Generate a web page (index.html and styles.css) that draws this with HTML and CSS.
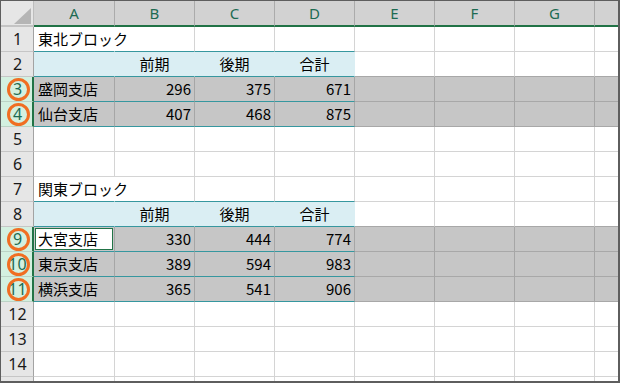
FILE: index.html
```html
<!DOCTYPE html>
<html lang="ja">
<head>
<meta charset="utf-8">
<title>Sheet</title>
<link rel="stylesheet" href="styles.css">
</head>
<body>
<div class="sheet">
  <!-- column headers -->
  <div class="corner"><svg class="tri" width="17" height="16" viewBox="0 0 17 16"><polygon points="17,0 17,16 0,16" fill="#b5b5b5"/></svg></div>
  <div class="ch">A</div><div class="ch">B</div><div class="ch">C</div><div class="ch">D</div><div class="ch">E</div><div class="ch">F</div><div class="ch">G</div><div class="ch last"></div>

  <!-- row 1 -->
  <div class="rh">1</div>
  <div class="c txt over tb">東北ブロック</div><div class="c tb"></div><div class="c tb"></div><div class="c tb"></div><div class="c"></div><div class="c"></div><div class="c"></div><div class="c last"></div>

  <!-- row 2 -->
  <div class="rh">2</div>
  <div class="c th"></div><div class="c th hd">前期</div><div class="c th hd">後期</div><div class="c th hd">合計</div><div class="c sb"></div><div class="c sb"></div><div class="c sb"></div><div class="c sb last"></div>

  <!-- row 3 -->
  <div class="rh sel mark">3</div>
  <div class="c s tb txt">盛岡支店</div><div class="c s tb num">296</div><div class="c s tb num">375</div><div class="c s tb num">671</div><div class="c s"></div><div class="c s"></div><div class="c s"></div><div class="c s last"></div>

  <!-- row 4 -->
  <div class="rh sel mark">4</div>
  <div class="c s tb txt">仙台支店</div><div class="c s tb num">407</div><div class="c s tb num">468</div><div class="c s tb num">875</div><div class="c s"></div><div class="c s"></div><div class="c s"></div><div class="c s last"></div>

  <!-- row 5 -->
  <div class="rh">5</div>
  <div class="c"></div><div class="c"></div><div class="c"></div><div class="c"></div><div class="c"></div><div class="c"></div><div class="c"></div><div class="c last"></div>

  <!-- row 6 -->
  <div class="rh">6</div>
  <div class="c"></div><div class="c"></div><div class="c"></div><div class="c"></div><div class="c"></div><div class="c"></div><div class="c"></div><div class="c last"></div>

  <!-- row 7 -->
  <div class="rh">7</div>
  <div class="c txt over tb">関東ブロック</div><div class="c tb"></div><div class="c tb"></div><div class="c tb"></div><div class="c"></div><div class="c"></div><div class="c"></div><div class="c last"></div>

  <!-- row 8 -->
  <div class="rh">8</div>
  <div class="c th"></div><div class="c th hd">前期</div><div class="c th hd">後期</div><div class="c th hd">合計</div><div class="c sb"></div><div class="c sb"></div><div class="c sb"></div><div class="c sb last"></div>

  <!-- row 9 -->
  <div class="rh sel mark">9</div>
  <div class="c s tb txt active">大宮支店</div><div class="c s tb num">330</div><div class="c s tb num">444</div><div class="c s tb num">774</div><div class="c s"></div><div class="c s"></div><div class="c s"></div><div class="c s last"></div>

  <!-- row 10 -->
  <div class="rh sel mark">10</div>
  <div class="c s tb txt">東京支店</div><div class="c s tb num">389</div><div class="c s tb num">594</div><div class="c s tb num">983</div><div class="c s"></div><div class="c s"></div><div class="c s"></div><div class="c s last"></div>

  <!-- row 11 -->
  <div class="rh sel mark">11</div>
  <div class="c s tb txt">横浜支店</div><div class="c s tb num">365</div><div class="c s tb num">541</div><div class="c s tb num">906</div><div class="c s"></div><div class="c s"></div><div class="c s"></div><div class="c s last"></div>

  <!-- row 12 -->
  <div class="rh">12</div>
  <div class="c"></div><div class="c"></div><div class="c"></div><div class="c"></div><div class="c"></div><div class="c"></div><div class="c"></div><div class="c last"></div>

  <!-- row 13 -->
  <div class="rh">13</div>
  <div class="c"></div><div class="c"></div><div class="c"></div><div class="c"></div><div class="c"></div><div class="c"></div><div class="c"></div><div class="c last"></div>

  <!-- row 14 -->
  <div class="rh">14</div>
  <div class="c"></div><div class="c"></div><div class="c"></div><div class="c"></div><div class="c"></div><div class="c"></div><div class="c"></div><div class="c last"></div>

  <!-- row 15 (partial) -->
  <div class="rh end"></div>
  <div class="c end"></div><div class="c end"></div><div class="c end"></div><div class="c end"></div><div class="c end"></div><div class="c end"></div><div class="c end"></div><div class="c end last"></div>
</div>
</body>
</html>
```
FILE: styles.css
```css
html, body {
  margin: 0;
  padding: 0;
  background: #ffffff;
}

.sheet {
  box-sizing: border-box;
  width: 620px;
  height: 383px;
  border-style: solid;
  border-color: #5e5e5e;
  border-width: 1px 2px 2px 1px;
  background: #ffffff;
  display: grid;
  grid-template-columns: 33px 81px repeat(6, 80px) 23px;
  grid-template-rows: 26px repeat(14, 25px) 4px;
  overflow: hidden;
  font-family: "Noto Sans CJK JP", "Noto Sans", sans-serif;
  font-size: 15px;
  color: #000000;
}

.sheet > div {
  box-sizing: border-box;
  min-width: 0;
}

/* corner */
.corner {
  background: #e6e6e6;
  border-right: 1px solid #bdbdbd;
  border-bottom: 2px solid #c4c4c4;
  display: flex;
  align-items: flex-end;
  justify-content: flex-end;
  padding: 0 2px 1px 0;
}
.tri { display: block; }

/* column headers */
.ch {
  background: #d2d2d2;
  border-right: 1px solid #ababab;
  border-bottom: 2px solid #217346;
  color: #1d6b52;
  font-family: "Noto Sans", "Liberation Sans", sans-serif;
  font-size: 15px;
  display: flex;
  align-items: center;
  justify-content: center;
  line-height: 1;
  padding-top: 1px;
}
.ch.last { border-right: none; }

/* row headers */
.rh {
  background: #e6e6e6;
  border-right: 1px solid #a3a3a3;
  border-bottom: 1px solid #c6c6c6;
  color: #1a1a1a;
  font-family: "Noto Sans", "Liberation Sans", sans-serif;
  font-size: 16px;
  display: flex;
  align-items: center;
  justify-content: center;
  line-height: 1;
  padding-left: 1px;
}
.rh.sel {
  background: #d3f0e0;
  color: #1d6b52;
  border-right: 2px solid #217346;
  border-bottom-color: #bcd3c6;
  padding-left: 2px;
}
.rh.mark { position: relative; }
.rh.mark::after {
  content: "";
  position: absolute;
  left: 6px;
  top: 1px;
  width: 23px;
  height: 23px;
  box-sizing: border-box;
  border: 3px solid #f06e22;
  border-radius: 50%;
}
.rh.end { border-bottom: none; }

/* cells */
.c {
  border-right: 1px solid #d4d4d4;
  border-bottom: 1px solid #d4d4d4;
  display: flex;
  align-items: center;
  line-height: 24px;
  white-space: nowrap;
}
.c.last { border-right: none; }
.c.end { border-bottom: none; }

.txt { padding-left: 4px; }
.over { overflow: visible; border-right-color: transparent; }
.num { justify-content: flex-end; padding-right: 3px; }
.hd { justify-content: center; }

/* teal table rule under a row */
.tb { border-bottom-color: #36979f; }

/* table header row */
.th {
  background: #daeef3;
  border-right-color: transparent;
  border-bottom-color: #36979f;
}

/* bottom gridline above a selected row */
.sb { border-bottom-color: #a8a8a8; }

/* selected rows */
.s {
  background: #c6c6c6;
  border-right-color: #a6a6a6;
}
.s:not(.tb) { border-bottom-color: #a8a8a8; }

/* active cell */
.active {
  background: #ffffff;
  box-shadow: inset 0 0 0 1px #c6c6c6, inset 0 0 0 2px #217346;
}
```
